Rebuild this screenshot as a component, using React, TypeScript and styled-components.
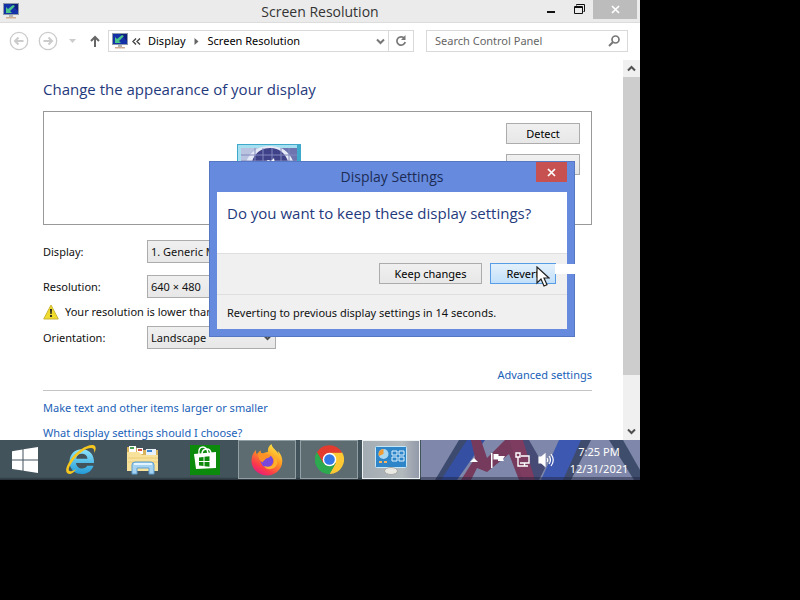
import React from "react";
import styled, { createGlobalStyle, css } from "styled-components";

const GlobalStyle = createGlobalStyle`
  * { box-sizing: border-box; }
  html, body { margin: 0; background: #000; }
  body, button, input, select {
    font-family: "Noto Sans", "Open Sans", sans-serif;
    font-size: 11px;
    line-height: 16px;
    color: #111;
  }
  svg { display: block; flex: none; }
`;

const Screen = styled.div`
  position: relative;
  display: flex;
  flex-direction: column;
  width: 80vw;
  height: 80vh;
  background: #fff;
  overflow: hidden;
`;

/* ---------- window frame ---------- */

const TitleBar = styled.header`
  display: grid;
  grid-template-columns: 1fr auto 1fr;
  flex: none;
  height: 23px;
  padding: 0 3px;
  background: #ebebeb;
  border-bottom: 1px solid #dcdcdc;
`;

const TitleIcon = styled.span`
  padding-top: 3px;
`;

const WindowTitle = styled.h1`
  margin: 0;
  font-family: "Open Sans", sans-serif;
  font-size: 14px;
  line-height: 23px;
  font-weight: 400;
  color: #333;
`;

const WindowButtons = styled.div`
  display: flex;
  justify-content: flex-end;
`;

const CaptionButton = styled.button<{ $wide?: boolean }>`
  display: flex;
  align-items: center;
  justify-content: center;
  width: ${(p) => (p.$wide ? 44 : 28)}px;
  height: 19px;
  padding: 0;
  border: 0;
  background: ${(p) => (p.$wide ? "#bcbcbc" : "transparent")};
`;

const NavBar = styled.nav`
  display: flex;
  align-items: center;
  flex: none;
  height: 36px;
  margin-bottom: 1px;
  padding: 0 12px 0 9px;
`;

const NavButton = styled.button<{ $width: number }>`
  display: flex;
  align-items: center;
  justify-content: flex-start;
  width: ${(p) => p.$width}px;
  height: 22px;
  padding: 0;
  border: 0;
  background: transparent;
`;

const AddressBar = styled.div`
  display: flex;
  align-items: center;
  flex: 1;
  height: 22px;
  padding-left: 3px;
  margin-right: 12px;
  border: 1px solid #d9d9d9;
`;

const Crumb = styled.a`
  padding: 0 8px 0 4px;
  color: #000;
  text-decoration: none;
  white-space: nowrap;
`;

const CrumbArrow = styled.svg`
  margin-right: 5px;
`;

const AddressButton = styled.button<{ $divided?: boolean }>`
  display: flex;
  align-items: center;
  justify-content: center;
  width: ${(p) => (p.$divided ? 25 : 16)}px;
  height: 20px;
  padding: 0;
  border: 0;
  background: transparent;
  ${(p) => p.$divided && css`border-left: 1px solid #d9d9d9;`}
`;

const Spacer = styled.span`
  flex: 1;
`;

const SearchBox = styled.label`
  display: flex;
  align-items: center;
  width: 202px;
  height: 22px;
  padding: 0 7px 0 8px;
  border: 1px solid #d9d9d9;
`;

const SearchInput = styled.input`
  flex: 1;
  min-width: 0;
  padding: 0;
  border: 0;
  outline: 0;
  background: transparent;
  &::placeholder { color: #666; opacity: 1; }
`;

/* ---------- page ---------- */

const Body = styled.div`
  display: flex;
  flex: 1;
  min-height: 0;
`;

const Page = styled.main`
  flex: 1;
  min-width: 0;
  padding: 17px 31px 0 43px;
  overflow: hidden;
`;

const Heading = styled.h2`
  margin: 0 0 10px;
  font-family: "Open Sans", sans-serif;
  font-size: 15px;
  line-height: 24px;
  font-weight: 400;
  color: #1f3a7d;
`;

const Preview = styled.section`
  display: flex;
  justify-content: flex-end;
  height: 114px;
  padding: 11px;
  border: 1px solid #999;
`;

const Monitor = styled.div`
  flex: 1;
  display: flex;
  justify-content: center;
  padding: 21px 24px 0 0;
`;

const PreviewButtons = styled.div`
  display: flex;
  flex-direction: column;
  gap: 10px;
`;

const PushButton = styled.button<{ $width: number; $active?: boolean }>`
  width: ${(p) => p.$width}px;
  height: 21px;
  padding: 0;
  border: 1px solid ${(p) => (p.$active ? "#569de5" : "#acacac")};
  background: ${(p) =>
    p.$active
      ? "linear-gradient(#e3f0fb, #c2e0fa)"
      : "linear-gradient(#f0f0f0, #e7e7e7)"};
  line-height: 19px;
  color: #000;
`;

const Form = styled.form`
  display: grid;
  grid-template-columns: 104px 1fr;
  align-items: center;
  padding-top: 15px;
`;

const FieldLabel = styled.label<{ $gap: number }>`
  margin-bottom: ${(p) => p.$gap}px;
`;

const FieldBox = styled.div<{ $width: number; $gap: number }>`
  display: grid;
  align-items: center;
  width: ${(p) => p.$width}px;
  height: 23px;
  margin-bottom: ${(p) => p.$gap}px;
  background: linear-gradient(#f0f0f0, #e7e7e7);
  & > * { grid-area: 1 / 1; }
  & > svg { justify-self: end; margin-right: 4px; pointer-events: none; }
`;

const Field = styled.select`
  appearance: none;
  width: 100%;
  height: 23px;
  margin: 0;
  padding: 0 20px 0 3px;
  border: 1px solid #acacac;
  border-radius: 0;
  background: transparent;
`;

const Warning = styled.p`
  grid-column: 1 / -1;
  display: flex;
  align-items: center;
  gap: 6px;
  height: 17px;
  margin: 0 0 6px;
  white-space: nowrap;
`;

const Link = styled.a`
  color: #1a62b8;
  text-decoration: none;
`;

const Advanced = styled.div`
  display: flex;
  justify-content: flex-end;
  padding: 18px 0 7px;
  border-bottom: 1px solid #c4c4c4;
`;

const Links = styled.div`
  display: flex;
  flex-direction: column;
  align-items: flex-start;
  gap: 9px;
  padding-top: 9px;
`;

const ScrollBar = styled.div`
  display: flex;
  flex-direction: column;
  width: 17px;
  background: #f0f0f0;
`;

const ScrollButton = styled.button`
  display: flex;
  align-items: center;
  justify-content: center;
  width: 17px;
  height: 17px;
  padding: 0;
  border: 0;
  background: transparent;
`;

const ScrollTrack = styled.div`
  flex: 1;
`;

const ScrollThumb = styled.div`
  height: 86%;
  background: #cdcdcd;
`;

/* ---------- dialog ---------- */

const Dialog = styled.section`
  position: absolute;
  left: 209px;
  top: 161px;
  width: 366px;
  padding: 0 7px 7px;
  border: 1px solid #5577c4;
  background: #668ade;
`;

const DialogTitle = styled.header`
  display: grid;
  grid-template-columns: 31px 1fr 31px;
  height: 30px;
  text-align: center;
`;

const DialogName = styled.h2`
  grid-column: 2;
  margin: 0;
  font-family: "Open Sans", sans-serif;
  font-size: 14px;
  line-height: 30px;
  font-weight: 400;
  color: #1c2c55;
`;

const DialogClose = styled.button`
  display: flex;
  align-items: center;
  justify-content: center;
  width: 31px;
  height: 20px;
  padding: 0;
  border: 0;
  background: #c75050;
`;

const DialogQuestion = styled.p`
  height: 61px;
  margin: 0;
  padding: 9px 10px;
  background: #fff;
  font-family: "Open Sans", sans-serif;
  font-size: 15px;
  line-height: 24px;
  color: #1f3a7d;
`;

const DialogActions = styled.div`
  position: relative;
  display: flex;
  justify-content: flex-end;
  gap: 8px;
  padding: 9px 11px 10px;
  border-top: 1px solid #dfdfdf;
  background: #f0f0f0;
`;

const DialogNote = styled.p`
  margin: 0;
  padding: 10px 10px 8px;
  border-top: 1px solid #dfdfdf;
  background: #f0f0f0;
`;

const PointerTrail = styled.span`
  position: absolute;
  right: -8px;
  top: 10px;
  width: 20px;
  height: 10px;
  background: #fff;
`;

const Pointer = styled.svg`
  position: absolute;
  right: 17px;
  top: 12px;
`;

/* ---------- taskbar ---------- */

const TaskBar = styled.footer`
  position: relative;
  display: flex;
  flex: none;
  height: 40px;
  background: linear-gradient(#42535c 0, #42535c 37px, #252e33 40px);
`;

const StartButton = styled.button`
  display: flex;
  align-items: center;
  justify-content: center;
  width: 50px;
  margin-right: 2px;
  padding: 0;
  border: 0;
  background: transparent;
`;

const Task = styled.button<{ $state?: "open" | "current" }>`
  display: flex;
  align-items: center;
  justify-content: center;
  width: 58px;
  height: 39px;
  margin-right: 4px;
  padding: 0;
  border: 1px solid transparent;
  background: transparent;
  ${(p) => p.$state === "open" && css`
    border-color: #93a0a3;
    background: #5d6c70;
  `}
  ${(p) => p.$state === "current" && css`
    border-color: #eef1f2;
    background: linear-gradient(90deg, #a3acb3, #b3babd 70%, #9299aa);
  `}
  &:last-of-type { margin-right: 1px; }
`;

const Tray = styled.div`
  position: relative;
  display: flex;
  flex: 1;
  align-items: center;
  justify-content: flex-end;
  background: #7f88aa;
  overflow: hidden;
`;

const Wallpaper = styled.svg`
  position: absolute;
  left: 0;
  top: 0;
  width: 100%;
  height: 100%;
`;

const TrayButton = styled.button`
  position: relative;
  display: flex;
  align-items: center;
  justify-content: center;
  width: 24px;
  height: 24px;
  padding: 0;
  border: 0;
  background: transparent;
`;

const Clock = styled.time`
  position: relative;
  width: 82px;
  text-align: center;
  line-height: 17px;
  color: #fff;
`;

/* ---------- drawings ---------- */

const ScreenIcon = () => (
  <svg width="16" height="16" viewBox="0 0 16 16">
    <rect x="0.5" y="0.5" width="15" height="11" fill="#1531a8" stroke="#8f9aa8" />
    <path d="M8 1h7v7z" fill="#0c1f7e" />
    <path d="M3 10V4l2 2 5-4 2 1-5 5 2 2z" fill="#4ac48c" />
    <path d="M6 12h4v2H6z" fill="#b5b5b5" />
    <path d="M3 14h10v1.500H3z" fill="#cfae93" />
  </svg>
);

const RoundArrow = ({ flip }: { flip?: boolean }) => (
  <svg width="20" height="20" viewBox="0 0 20 20" fill="none" stroke="#cbcbcb">
    <circle cx="10" cy="10" r="8.700" strokeWidth="1.300" />
    <path
      d={flip ? "M5.500 10h8M10.500 6.500l3.500 3.500-3.500 3.500" : "M14.500 10h-8M9.500 6.500L6 10l3.500 3.500"}
      strokeWidth="2"
    />
  </svg>
);

const Chevron = ({ up, color = "#505050" }: { up?: boolean; color?: string }) => (
  <svg width="9" height="7" viewBox="0 0 9 7" fill="none" stroke={color} strokeWidth="2">
    <path d={up ? "M1 5.500l3.500-3.500L8 5.500" : "M1 1.500L4.500 5 8 1.500"} />
  </svg>
);

const Cross = () => (
  <svg width="9" height="9" viewBox="0 0 9 9" stroke="#fff" strokeWidth="1.700">
    <path d="M1 1l7 7M8 1L1 8" />
  </svg>
);

const MonitorDrawing = () => (
  <svg width="64" height="54" viewBox="0 0 64 54">
    <rect width="64" height="50" fill="#3fa9cc" />
    <rect x="1" y="1" width="59" height="48" fill="#a5dff0" />
    <rect x="4" y="4" width="56" height="42" fill="#b9c3e0" />
    <path d="M42 4h18v42H42z" fill="#6d74b0" />
    <path d="M6 46C4 20 12 2 33 2s28 18 26 44" fill="#e6e9f6" />
    <path d="M13 46C10 16 19 4 33 4s23 12 20 42" fill="#3f4189" />
    <path d="M4 11h56M4 17h56M18 4v42M26 4v42M35 4v42M44 4v42M52 4v42" stroke="#8289bd" />
    <path d="M28 18l3-2 3 1 3-3 1 6H28z" fill="#fff" />
  </svg>
);

const WarningIcon = () => (
  <svg width="16" height="16" viewBox="0 0 16 16">
    <path d="M8 1l7.300 14H0.700z" fill="#f0dc2c" stroke="#c9b43a" strokeLinejoin="round" />
    <path d="M7 5h2l-.4 5H7.400zM7.100 11h1.800v2H7.100z" fill="#222" />
  </svg>
);

const WindowsLogo = () => (
  <svg width="26" height="26" viewBox="0 0 26 26" fill="#fff">
    <path d="M0 4.200L10.500 2.500v10H0zM11.500 2.300L26 0v12.500H11.500zM0 13.500h10.500v10L0 22zM11.500 13.500H26V26l-14.500-2.300z" />
  </svg>
);

const ExplorerE = () => (
  <svg width="32" height="32" viewBox="0 0 32 32">
    <defs>
      <linearGradient id="ie" x1="0" y1="0" x2="0" y2="1">
        <stop offset="0" stopColor="#8ee4fb" />
        <stop offset="1" stopColor="#239bd8" />
      </linearGradient>
    </defs>
    <path d="M29 19H11c.3 3.500 3 5.500 6 5.500 2.500 0 4.200-1 5.200-2.800h6.300C26.500 27 22.500 30 16.800 30 9.500 30 4.500 25 4.500 17.700 4.500 10.500 9.500 5.200 16.800 5.200 24.500 5.200 29.500 10.700 29 19zM11.200 14.700h11.300c-.3-3-2.600-4.900-5.600-4.900-3.100 0-5.300 1.900-5.700 4.900z" fill="url(#ie)" />
    <path d="M5.500 30C0 30.500-.5 25 5 16.500 11 7.500 21 .8 27.500 1c4 .2 3.800 4.300 1.800 8.200.3-3.500-.5-5.300-3.300-5.200C20.500 4 12.500 10.200 7.500 17.500c-4.700 7-5.200 10.500-.5 9.500 1.600-.3 3-1 4.500-2C9.500 27.500 7.500 29.500 5.500 30z" fill="#f4c61f" />
  </svg>
);

const FolderIcon = () => (
  <svg width="34" height="32" viewBox="0 0 34 32">
    <path d="M1 3h9l2 3h20v20H1z" fill="#d9b35b" />
    <path d="M3 2h7v6H3zM11 4h6v6h-6z" fill="#fff" />
    <path d="M4 3h4v2H4z" fill="#4aa353" />
    <path d="M12 5h4v2h-4z" fill="#cf5346" />
    <path d="M20 5h10v6H20z" fill="#e8f1fa" />
    <path d="M21 6h5v2h-5z" fill="#3c86d0" />
    <path d="M1 8h12l3 3h16v16H1z" fill="#f8e29b" />
    <path d="M2 14h30M2 18h30" stroke="#edcc78" />
    <path d="M6 30V21q0-3 3-3h16q3 0 3 3v9h-5v-6H11v6z" fill="#a4d2f0" stroke="#5c9fd0" />
    <path d="M8 20h18" stroke="#e2f4ff" strokeWidth="2" />
  </svg>
);

const StoreIcon = () => (
  <svg width="30" height="30" viewBox="0 0 30 30">
    <path d="M0 0h30v30H0z" fill="#0b8a0b" />
    <path d="M4 9l22-2v16L6 24z" fill="#fff" />
    <path d="M9 9c-1-6 2-7 4-7s4 1 5 6M12 9c0-6 8-7 9-1" fill="none" stroke="#fff" strokeWidth="1.500" />
    <path d="M9 12.500l4.500-.5v4H9zM14.500 11.800l5-.6v4.800h-5zM9 17h4.500v4L9 20.500zM14.500 17h5v4.800l-5-.6z" fill="#0b8a0b" />
  </svg>
);

const FirefoxIcon = () => (
  <svg width="32" height="32" viewBox="0 0 32 32">
    <defs>
      <linearGradient id="fox" x1="0.8" y1="0" x2="0.2" y2="1">
        <stop offset="0" stopColor="#fff14a" />
        <stop offset="0.400" stopColor="#ff9a22" />
        <stop offset="0.750" stopColor="#fb3b49" />
        <stop offset="1" stopColor="#e31587" />
      </linearGradient>
    </defs>
    <path d="M29.500 10.500c-.8-1.700-2-3-3-3.500.8 1.500 1 2.700 1.100 3.500C25.500 5.500 21 4.500 20.500 0c-3 2-4 5.500-3.500 8-2.500.1-4.500 1-6 2.500-1-.5-1.400-2.500-1.200-4-2 1-3 2.300-3.800 3.600-.8 0-1.300-2.400-1-4.100C1.500 9 .5 13 .5 17 .5 25 7.500 31.500 16 31.500S31.300 25 31.300 17c0-2.500-.7-4.500-1.800-6.500z" fill="url(#fox)" />
    <circle cx="16" cy="17" r="6.300" fill="#7848dc" />
    <path d="M7 10c3-2 6-1 8 .5 2 0 4 .5 4.500 1.500-1 2-3.500 2-4.500 2.500-1 1.500-3 2.500-3.500 4C9 17 7 14 7 10z" fill="#ff9226" />
    <path d="M22 13c4 6-2 12-9 9 3 5 11 4 13-2 1-3-1-6-4-7z" fill="#ffb12b" />
  </svg>
);

const ChromeIcon = () => (
  <svg width="29" height="29" viewBox="0 0 30 30">
    <path d="M15 15L2 7.500A15 15 0 0 0 15 30l6.500-11.200z" fill="#2da94f" />
    <path d="M15 15l6.500 3.800L15 30A15 15 0 0 0 28 7.500H15z" fill="#fcc934" />
    <path d="M2 7.500l6.500 11.300L15 15V8h13a15 15 0 0 0-26-.5z" fill="#e33b2e" />
    <path d="M2 7.500A15 15 0 0 0 15 30l5-8.500A7.500 7.500 0 0 1 8.500 18.800z" fill="#2da94f" />
    <circle cx="15" cy="15" r="7" fill="#fff" />
    <circle cx="15" cy="15" r="5.500" fill="#3478e5" />
  </svg>
);

const DisplayPanelIcon = () => (
  <svg width="34" height="30" viewBox="0 0 34 30">
    <rect x="1.500" y="1.500" width="31" height="21" rx="1" fill="#2e86c8" stroke="#c5e7fa" />
    <circle cx="9.500" cy="9" r="5" fill="#a8d7f2" />
    <path d="M9.500 9V4a5 5 0 0 0-4.500 7z" fill="#ef9c35" />
    <path d="M18 6h5v4h-5zM25 6h5v4h-5zM18 12h5v4h-5zM25 12h5v4h-5z" fill="none" stroke="#dff2ff" />
    <path d="M5 17h3M10 17h3" stroke="#f4b464" strokeWidth="2" />
    <ellipse cx="17" cy="26" rx="6.500" ry="3.500" fill="#e9e9e4" stroke="#a8a8a6" />
  </svg>
);

const FlagIcon = () => (
  <svg width="16" height="16" viewBox="0 0 16 16" fill="#fff">
    <path d="M1 1h1.500v15H1zM3.500 2h5v2H15l-2 3 1 2H8V7.500H3.500z" />
  </svg>
);

const NetworkIcon = () => (
  <svg width="16" height="16" viewBox="0 0 16 16" fill="none" stroke="#fff" strokeWidth="1.400">
    <path d="M7 4h8v7H6M10.500 11v3M7 14h7M2 1h4v4H2zM4 5v9h3" />
  </svg>
);

const SpeakerIcon = () => (
  <svg width="16" height="16" viewBox="0 0 16 16" fill="none" stroke="#fff" strokeWidth="1.200">
    <path d="M1 5h2.500L7 2v12l-3.500-3H1z" fill="#fff" />
    <path d="M9 6q1.500 2 0 4M11 4q3 4 0 8M13 2q4.500 6 0 12" />
  </svg>
);

const WallpaperDrawing = () => (
  <Wallpaper viewBox="0 0 219 40" preserveAspectRatio="none">
    <path d="M38 0h10L26 40H14z" fill="#3d4a70" />
    <path d="M46 0h18L36 40H20z" fill="#3550a3" />
    <path d="M50 0h10l6 18L84 0h20l12 40H98L88 14 66 32 56 28 50 40H40l14-22z" fill="#753a5c" />
    <path d="M88 0h20l16 28-6 12h-12z" fill="#454b75" />
    <path d="M88 0h14l12 40h-12z" fill="#7d3c60" />
    <path d="M138 0h28l-20 40h-26z" fill="#3c58b0" />
    <path d="M160 0h10l-20 40h-8z" fill="#3f4b6c" />
    <path d="M188 0h14l17 30v10h-6z" fill="#3e4d6c" />
    <path d="M0 37h219v3H0z" fill="#1a2038" opacity="0.450" />
  </Wallpaper>
);

export default function App() {
  return (
    <>
      <GlobalStyle />
      <Screen>
        <TitleBar>
          <TitleIcon><ScreenIcon /></TitleIcon>
          <WindowTitle>Screen Resolution</WindowTitle>
          <WindowButtons>
            <CaptionButton aria-label="Minimize">
              <svg width="8" height="8"><path d="M0 5h8v2H0z" fill="#111" /></svg>
            </CaptionButton>
            <CaptionButton aria-label="Restore">
              <svg width="11" height="11" fill="none" stroke="#111">
                <path d="M2.500 1.500v-1h8v7h-1" />
                <path d="M0.500 2.500h8v7h-8zM0.500 3.500h8" />
              </svg>
            </CaptionButton>
            <CaptionButton $wide aria-label="Close"><Cross /></CaptionButton>
          </WindowButtons>
        </TitleBar>

        <NavBar>
          <NavButton $width={29} aria-label="Back"><RoundArrow /></NavButton>
          <NavButton $width={29} aria-label="Forward"><RoundArrow flip /></NavButton>
          <NavButton $width={23} aria-label="Recent pages">
            <svg width="10" height="5"><path d="M2 0h7L5.500 4z" fill="#ccc" /></svg>
          </NavButton>
          <NavButton $width={18} aria-label="Up">
            <svg width="10" height="12" fill="none" stroke="#666" strokeWidth="2">
              <path d="M5 12V2M1 6l4-4 4 4" />
            </svg>
          </NavButton>
          <AddressBar>
            <ScreenIcon />
            <AddressButton aria-label="Earlier locations">
              <svg width="9" height="7" fill="none" stroke="#444" strokeWidth="1.400">
                <path d="M4 .5l-3 3 3 3M8 .5l-3 3 3 3" />
              </svg>
            </AddressButton>
            <Crumb href="#display">Display</Crumb>
            <CrumbArrow width="5" height="7"><path d="M0.500 0l4 3.500-4 3.500z" fill="#666" /></CrumbArrow>
            <Crumb href="#resolution">Screen Resolution</Crumb>
            <Spacer />
            <AddressButton aria-label="Show locations"><Chevron color="#777" /></AddressButton>
            <AddressButton $divided aria-label="Refresh">
              <svg width="12" height="12" fill="none" stroke="#777" strokeWidth="1.700">
                <path d="M9.500 3.500A4.200 4.200 0 1 0 10.200 7" />
                <path d="M10.500 0v5H6z" fill="#777" stroke="none" />
              </svg>
            </AddressButton>
          </AddressBar>
          <SearchBox>
            <SearchInput aria-label="Search Control Panel" placeholder="Search Control Panel" />
            <svg width="12" height="12" fill="none" stroke="#777" strokeWidth="1.700">
              <circle cx="7.500" cy="4.500" r="3.500" />
              <path d="M5 7l-4 4" strokeWidth="2" />
            </svg>
          </SearchBox>
        </NavBar>

        <Body>
          <Page>
            <Heading>Change the appearance of your display</Heading>
            <Preview>
              <Monitor><MonitorDrawing /></Monitor>
              <PreviewButtons>
                <PushButton $width={74}>Detect</PushButton>
                <PushButton $width={74}>Identify</PushButton>
              </PreviewButtons>
            </Preview>
            <Form>
              <FieldLabel htmlFor="display" $gap={12}>Display:</FieldLabel>
              <FieldBox $width={240} $gap={12}>
                <Field id="display"><option>1. Generic Monitor</option></Field>
                <Chevron />
              </FieldBox>
              <FieldLabel htmlFor="resolution" $gap={5}>Resolution:</FieldLabel>
              <FieldBox $width={240} $gap={5}>
                <Field id="resolution"><option>640 × 480</option></Field>
                <Chevron />
              </FieldBox>
              <Warning><WarningIcon />Your resolution is lower than</Warning>
              <FieldLabel htmlFor="orientation" $gap={0}>Orientation:</FieldLabel>
              <FieldBox $width={129} $gap={0}>
                <Field id="orientation"><option>Landscape</option></Field>
                <Chevron />
              </FieldBox>
            </Form>
            <Advanced><Link href="#advanced">Advanced settings</Link></Advanced>
            <Links>
              <Link href="#size">Make text and other items larger or smaller</Link>
              <Link href="#help">What display settings should I choose?</Link>
            </Links>
          </Page>
          <ScrollBar>
            <ScrollButton aria-label="Scroll up"><Chevron up /></ScrollButton>
            <ScrollTrack><ScrollThumb /></ScrollTrack>
            <ScrollButton aria-label="Scroll down"><Chevron /></ScrollButton>
          </ScrollBar>
        </Body>

        <TaskBar>
          <StartButton aria-label="Start"><WindowsLogo /></StartButton>
          <Task aria-label="Internet Explorer"><ExplorerE /></Task>
          <Task aria-label="File Explorer"><FolderIcon /></Task>
          <Task aria-label="Store"><StoreIcon /></Task>
          <Task $state="open" aria-label="Firefox"><FirefoxIcon /></Task>
          <Task $state="open" aria-label="Chrome"><ChromeIcon /></Task>
          <Task $state="current" aria-label="Display"><DisplayPanelIcon /></Task>
          <Tray>
            <WallpaperDrawing />
            <TrayButton aria-label="Show hidden icons">
              <svg width="8" height="5"><path d="M0 4l4-4 4 4z" fill="#fff" /></svg>
            </TrayButton>
            <TrayButton aria-label="Action center"><FlagIcon /></TrayButton>
            <TrayButton aria-label="Network"><NetworkIcon /></TrayButton>
            <TrayButton aria-label="Volume"><SpeakerIcon /></TrayButton>
            <Clock>7:25 PM<br />12/31/2021</Clock>
          </Tray>
        </TaskBar>

        <Dialog role="dialog" aria-labelledby="dialog-name">
          <DialogTitle>
            <DialogName id="dialog-name">Display Settings</DialogName>
            <DialogClose aria-label="Close"><Cross /></DialogClose>
          </DialogTitle>
          <DialogQuestion>Do you want to keep these display settings?</DialogQuestion>
          <DialogActions>
            <PushButton $width={103}>Keep changes</PushButton>
            <PushButton $width={66} $active>Revert</PushButton>
            <PointerTrail />
            <Pointer width="14" height="21" viewBox="0 0 14 21">
              <path d="M1 1v16l4-4 3 7 3-1.300-3-6.700h5z" fill="#fff" stroke="#222" strokeWidth="1.200" />
            </Pointer>
          </DialogActions>
          <DialogNote>Reverting to previous display settings in 14 seconds.</DialogNote>
        </Dialog>
      </Screen>
    </>
  );
}
